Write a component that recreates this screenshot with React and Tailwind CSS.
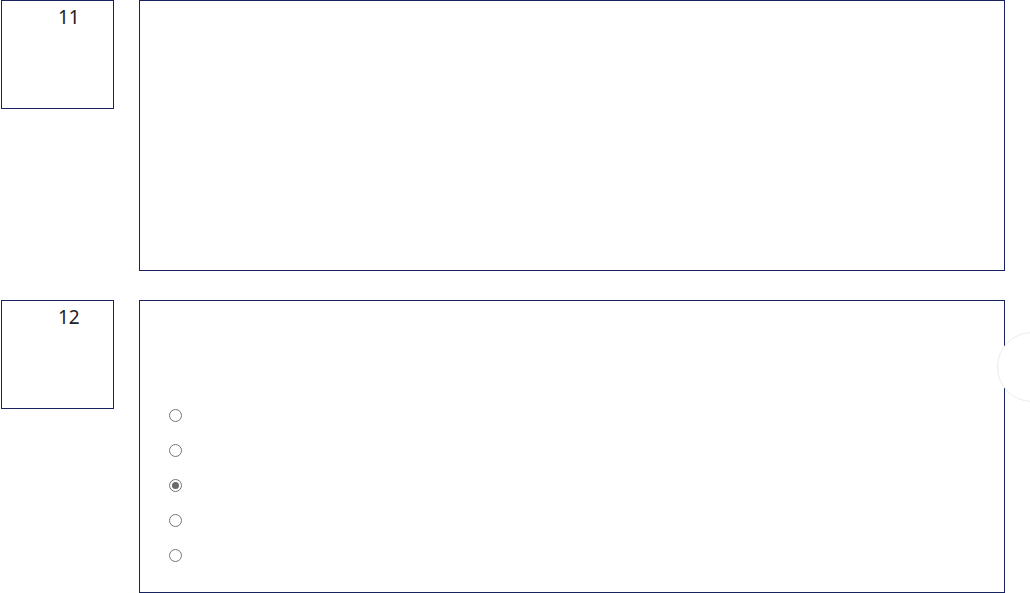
export default function App() {
  const radios = [false, false, true, false, false];
  return (
    <div className="relative w-[1030px] h-[593px] overflow-hidden bg-white" style={{ fontFamily: '"Noto Sans", "Open Sans", sans-serif' }}>
      <div className="flex flex-col gap-[29px]">
        <div className="flex items-start">
          <div className="ml-[1px] w-[113px] h-[109px] border border-[#16235e] pl-[56px] pt-[3px] text-[19px] leading-[26px] text-[#222]">11</div>
          <div className="ml-[25px] w-[866px] h-[271px] border border-[#16235e]"></div>
        </div>
        <div className="flex items-start">
          <div className="ml-[1px] w-[113px] h-[109px] border border-[#16235e] pl-[56px] pt-[3px] text-[19px] leading-[26px] text-[#222]">12</div>
          <div className="ml-[25px] w-[866px] h-[293px] border border-[#16235e] pl-[29px] pt-[108px] flex flex-col gap-[22px]">
            {radios.map((c, i) => (
              <div key={i} className="w-[13px] h-[13px] rounded-full border border-[#767676] bg-white flex items-center justify-center">
                {c && <div className="w-[7px] h-[7px] rounded-full bg-[#6b6b6b]"></div>}
              </div>
            ))}
          </div>
        </div>
      </div>
      <div className="absolute left-[997px] top-[332px] w-[70px] h-[70px] rounded-full bg-white border border-[#ececec]"></div>
    </div>
  );
}
